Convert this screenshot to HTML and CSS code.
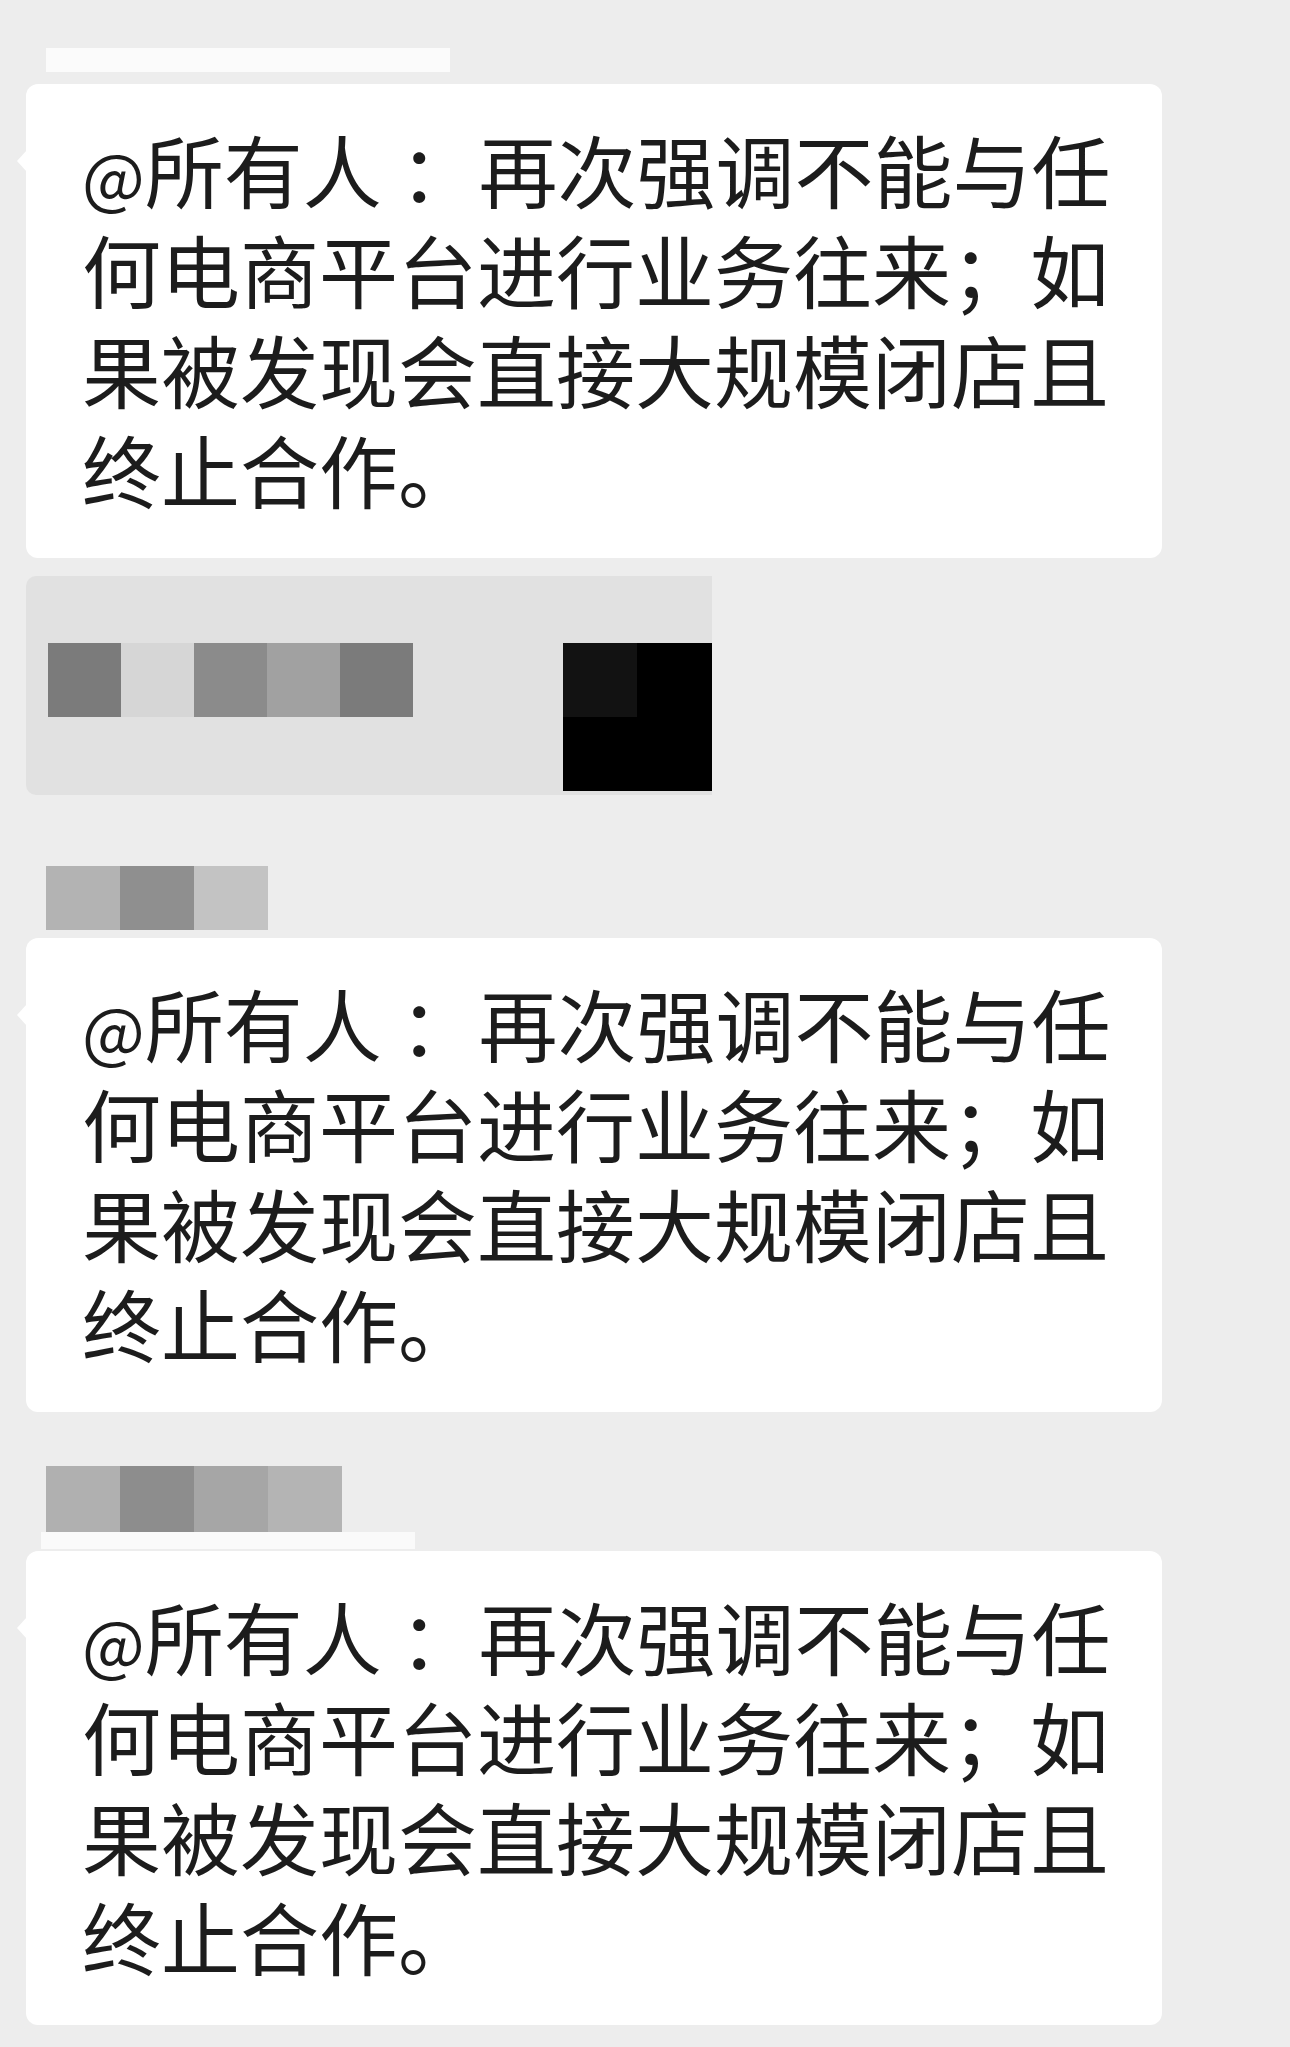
FILE: index.html
```html
<!DOCTYPE html>
<html lang="zh-CN">
<head>
    <meta charset="utf-8">
    <title>群聊</title>
    <link rel="stylesheet" href="styles.css">
</head>
<body>
    <div class="chat">
        <!-- first sender name (hidden) -->
        <div class="name name-blank"></div>
        <div class="bubble first">
            <p class="msg"><span class="at">@</span>所有人 ：再次强调不能与任<br>何电商平台进行业务往来；如<br>果被发现会直接大规模闭店且<br>终止合作。</p>
        </div>

        <!-- pixelated card message -->
        <div class="card">
            <div class="pixels">
                <span class="px p1"></span>
                <span class="px p2"></span>
                <span class="px p3"></span>
                <span class="px p4"></span>
                <span class="px p1"></span>
            </div>
            <div class="thumb">
                <span class="thumb-corner"></span>
            </div>
        </div>

        <div class="name pix second">
            <span class="px n1"></span>
            <span class="px n2"></span>
            <span class="px n3"></span>
        </div>
        <div class="bubble near">
            <p class="msg"><span class="at">@</span>所有人 ：再次强调不能与任<br>何电商平台进行业务往来；如<br>果被发现会直接大规模闭店且<br>终止合作。</p>
        </div>

        <div class="name pix third">
            <span class="px m1"></span>
            <span class="px m2"></span>
            <span class="px m3"></span>
            <span class="px m4"></span>
        </div>
        <div class="name-strip"></div>
        <div class="bubble tight">
            <p class="msg"><span class="at">@</span>所有人 ：再次强调不能与任<br>何电商平台进行业务往来；如<br>果被发现会直接大规模闭店且<br>终止合作。</p>
        </div>
    </div>
</body>
</html>
```

FILE: styles.css
```css
body {
    margin: 0;
    background-color: #ededed;
    font-family: "Noto Sans CJK SC", "Noto Sans", sans-serif;
}

.chat {
    display: flex;
    flex-direction: column;
    align-items: flex-start;
    padding: 48px 0 0 26px;
}

/* sender names */
.name {
    margin-left: 20px;
}

.name-blank {
    width: 404px;
    height: 24px;
    background-color: #fbfbfb;
}

.pix {
    display: flex;
}

.pix .px {
    width: 74px;
    height: 64px;
}

.second {
    margin-top: 71px;
}

.third {
    margin-top: 54px;
}

.third .px {
    height: 66px;
}

.n1 { background-color: #b3b3b3; }
.n2 { background-color: #8f8f8f; }
.n3 { background-color: #c3c3c3; }

.m1 { background-color: #b0b0b0; }
.m2 { background-color: #8d8d8d; }
.m3 { background-color: #a6a6a6; }
.m4 { background-color: #b4b4b4; }

.name-strip {
    margin-left: 15px;
    width: 374px;
    height: 17px;
    background-color: #fafafa;
}

/* text bubbles */
.bubble {
    position: relative;
    width: 1136px;
    box-sizing: border-box;
    padding: 35px 20px 39px 56px;
    background-color: #fff;
    border-radius: 12px;
}

.bubble::before {
    content: "";
    position: absolute;
    left: -9px;
    top: 66px;
    border-top: 11px solid transparent;
    border-bottom: 11px solid transparent;
    border-right: 10px solid #fff;
}

.first {
    margin-top: 12px;
}

.near {
    margin-top: 8px;
}

.tight {
    margin-top: 2px;
}

.msg {
    margin: 0;
    font-size: 79px;
    line-height: 100px;
    color: #1c1c1c;
    white-space: nowrap;
}

.msg .at {
    font-size: 0.84em;
    line-height: 1;
}

/* card with pixelated content */
.card {
    display: flex;
    align-items: flex-start;
    margin-top: 18px;
    width: 686px;
    height: 219px;
    box-sizing: border-box;
    padding: 67px 0 0 22px;
    background-color: #e1e1e1;
    border-radius: 10px 0 0 10px;
}

.pixels {
    display: flex;
}

.pixels .px {
    width: 73px;
    height: 74px;
}

.p1 { background-color: #7b7b7b; }
.p2 { background-color: #d6d6d6; }
.p3 { background-color: #8b8b8b; }
.p4 { background-color: #a1a1a1; }

.thumb {
    margin-left: auto;
    width: 149px;
    height: 148px;
    background-color: #000;
}

.thumb-corner {
    display: block;
    width: 74px;
    height: 74px;
    background-color: #121212;
}
```
